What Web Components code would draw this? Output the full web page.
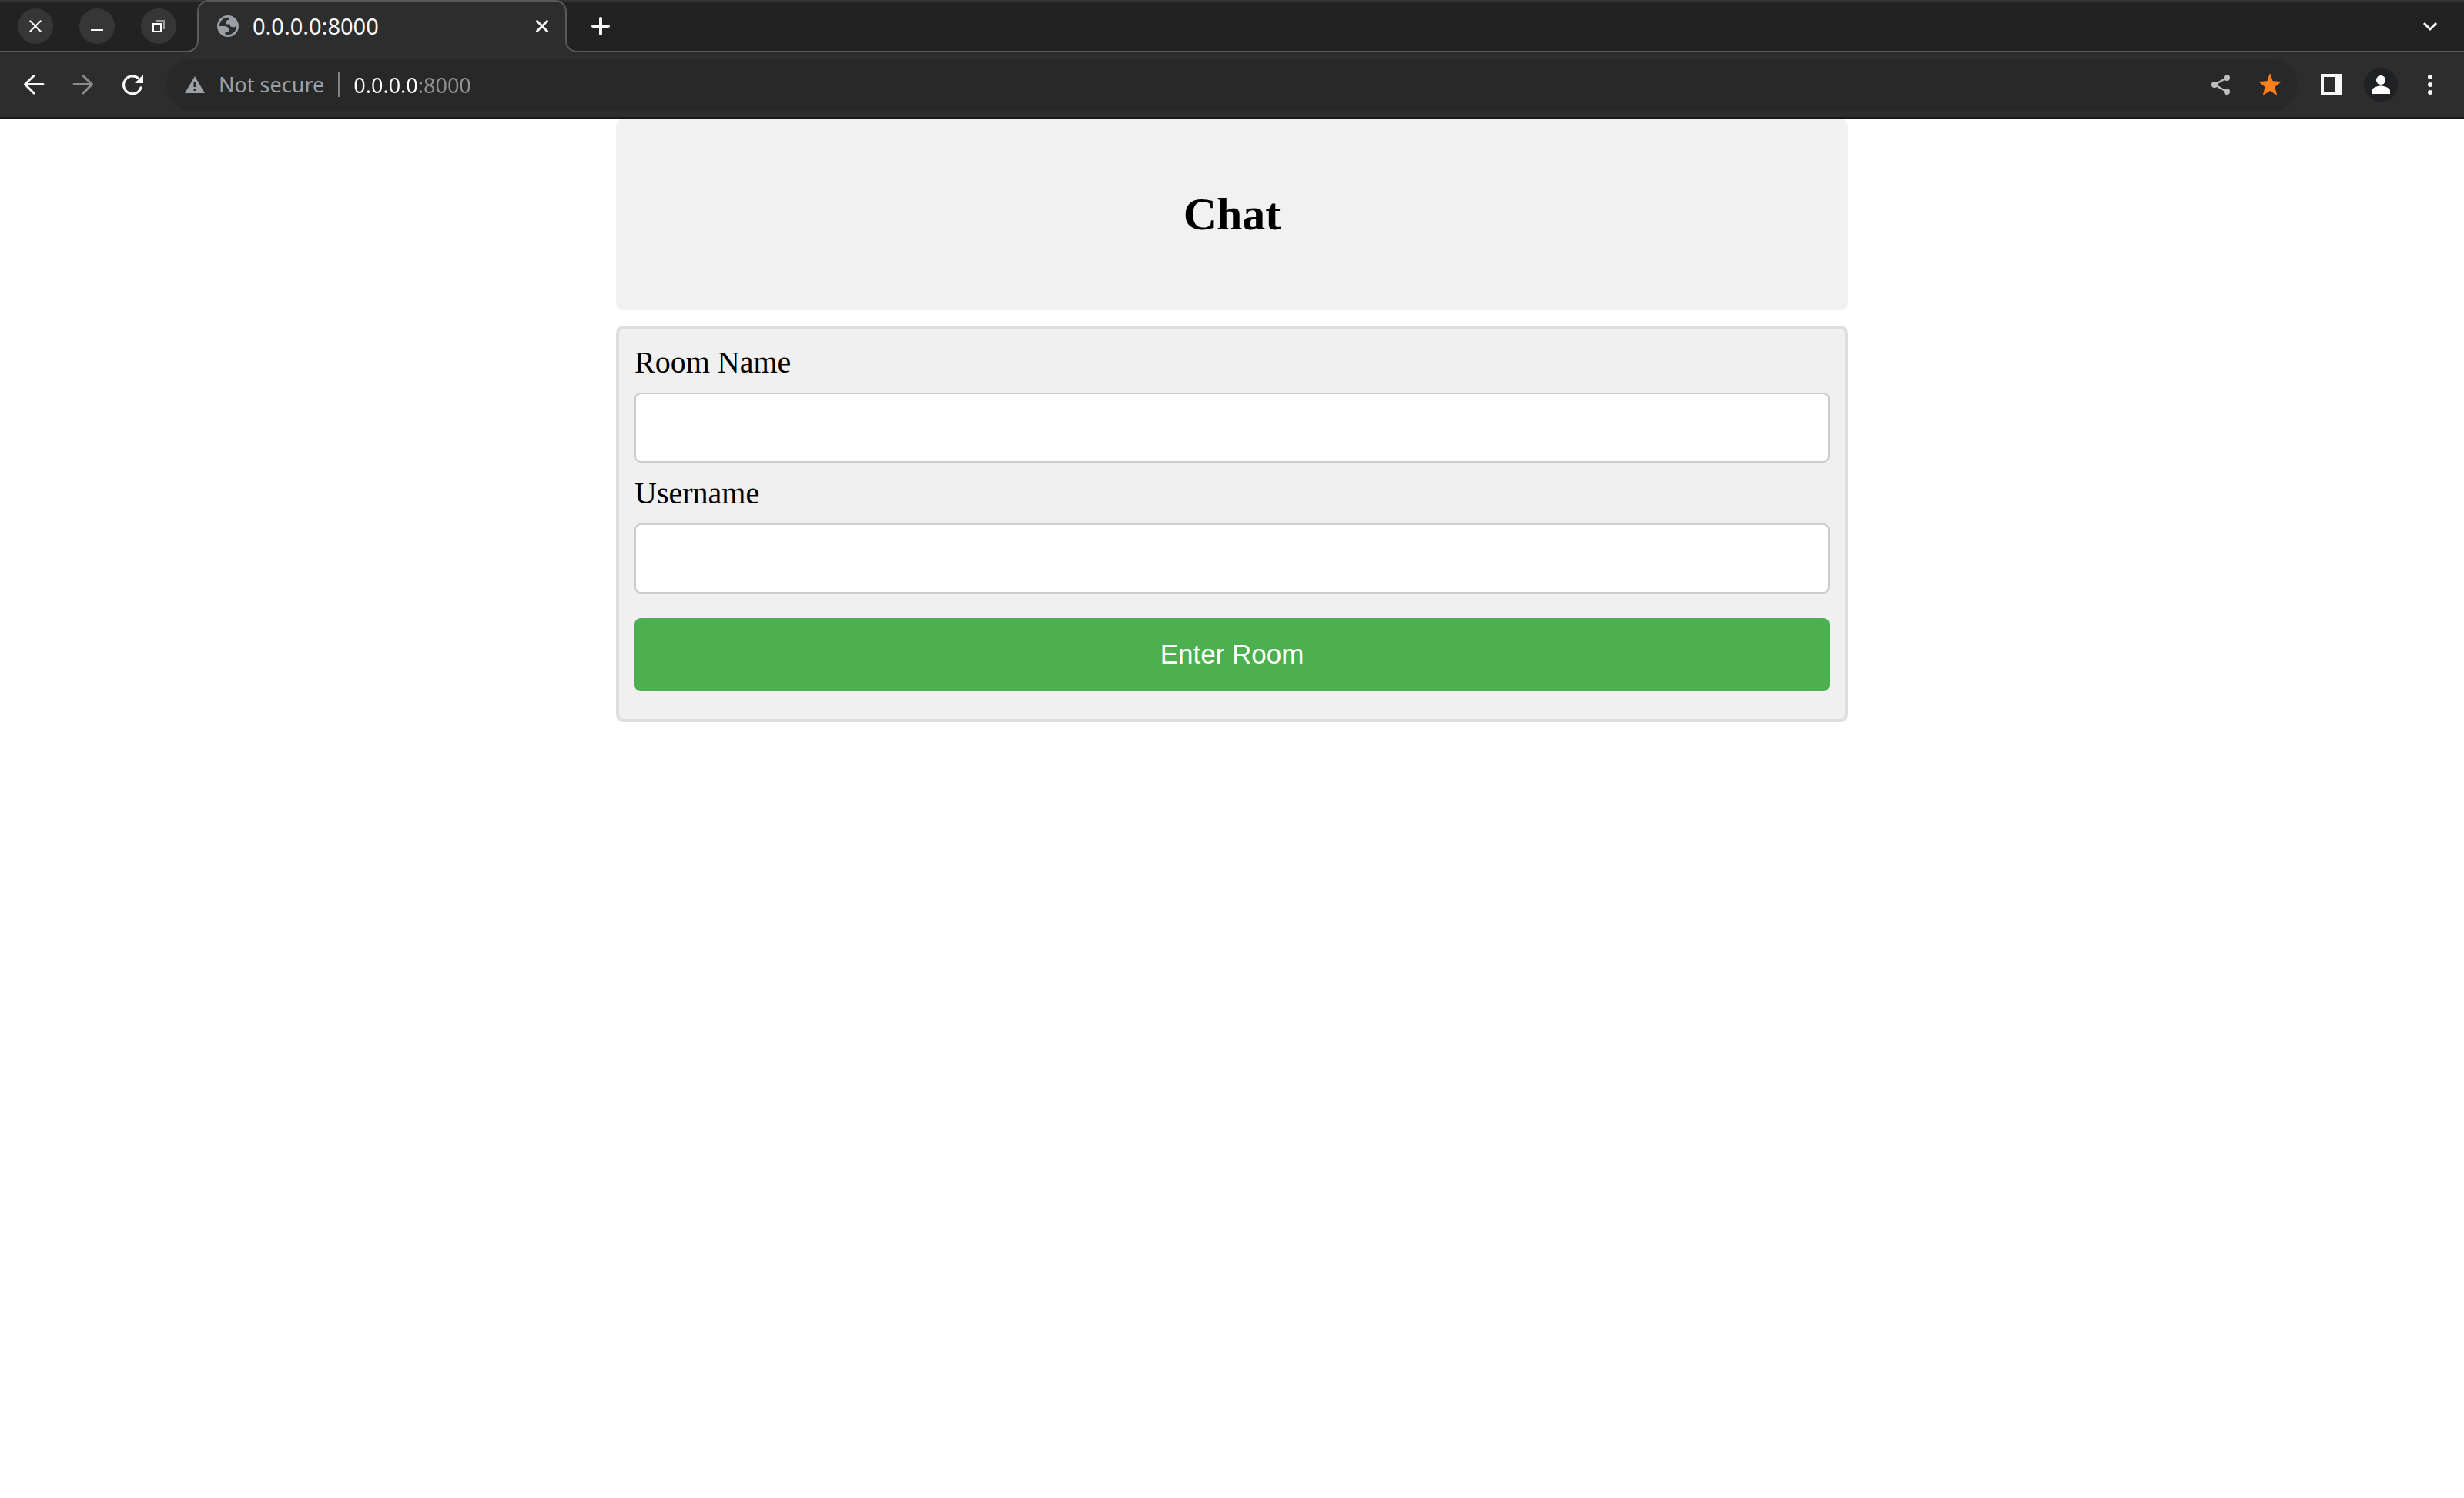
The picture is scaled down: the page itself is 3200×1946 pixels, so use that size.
<!DOCTYPE html>
<html lang="en">
<head>
<meta charset="utf-8">
<title>0.0.0.0:8000</title>
<style>
html, body { margin: 0; background: #fff; }
</style>
</head>
<body>
<browser-window></browser-window>

<template id="browser-window">
  <style>
    :host { display: flex; flex-direction: column; min-height: 100vh; }
    main { flex: 1; background: #fff; }
  </style>
  <tab-strip></tab-strip>
  <tool-bar></tool-bar>
  <main>
    <chat-page>
      <chat-header>Chat</chat-header>
      <room-form></room-form>
    </chat-page>
  </main>
</template>

<template id="icon-button">
  <style>
    :host { display: flex; width: 64px; align-self: stretch; color: #f8f8f8; }
    button { all: unset; flex: 1; display: flex; align-items: center; justify-content: center; cursor: pointer; }
    ::slotted(svg) { display: block; }
  </style>
  <button type="button"><slot></slot></button>
</template>

<template id="tab-strip">
  <style>
    :host { display: flex; height: 68px; background: #222; font-family: "Noto Sans", "Open Sans", sans-serif; }
    .rest, .controls { display: flex; align-items: center; box-sizing: border-box; border-top: 2px solid #333; border-bottom: 2px solid #5a5a5a; }
    .controls { padding: 0 14px 0 23px; gap: 34px; }
    .controls icon-button { width: 46px; height: 46px; align-self: center; border-radius: 50%; background: #363636; }
    .edge { display: block; flex: none; }
    .tab { display: flex; align-items: center; box-sizing: border-box; width: 450px; padding-left: 11px; gap: 18px; background: #2d2d2d; border-top: 2px solid #5a5a5a; padding-bottom: 2px; }
    .title { flex: 1; font-size: 29px; line-height: 40px; color: #f8f8f8; }
    .tab icon-button { width: 34px; }
    .rest { flex: 1; justify-content: space-between; padding-right: 12px; }
    .plus { width: 62px; }
  </style>
  <div class="controls">
    <icon-button label="Close window"><svg width="16" height="16" viewBox="0 0 16 16" fill="none" stroke="currentColor" stroke-width="2"><path d="M.7.7 15.3 15.3M15.3.7.7 15.3"/></svg></icon-button>
    <icon-button label="Minimise"><svg width="16" height="16" viewBox="0 0 16 16" fill="currentColor"><path d="M0 12h16v2H0z"/></svg></icon-button>
    <icon-button label="Restore"><svg width="16" height="16" viewBox="0 0 16 16" fill="none" stroke-width="2"><path d="M4 1h11v11" stroke="#999"/><path d="M1 5h10v10H1z" stroke="#fff"/></svg></icon-button>
  </div>
  <svg class="edge" width="28" height="68" viewBox="0 0 28 68"><path d="M0 0h28v2H0z" fill="#333"/><path d="M0 67A14 14 0 0 0 14 53V15A14 14 0 0 1 28 1V68H0z" fill="#2d2d2d"/><path d="M0 67A14 14 0 0 0 14 53V15A14 14 0 0 1 28 1" fill="none" stroke="#5a5a5a" stroke-width="2"/></svg>
  <div class="tab">
    <svg width="28" height="28" viewBox="2 2 20 20"><path fill="#9aa0a6" fill-rule="evenodd" d="M12 2C6.480 2 2 6.480 2 12s4.480 10 10 10 10-4.480 10-10S17.520 2 12 2zM4 12h4.400c3.407.022 4.922 1.730 4.543 5.127H9.488v2.470a8.004 8.004 0 0 0 10.498-8.083C19.327 12.504 18.332 13 17 13c-2.137 0-3.206-.916-3.206-2.750h-3.748c-.274-2.728.683-4.092 2.870-4.092 0-.975.327-1.597.811-1.970A8.004 8.004 0 0 0 4 12z"/></svg>
    <span class="title">0.0.0.0:8000</span>
    <icon-button label="Close tab"><svg width="18" height="18" viewBox="0 0 18 18" fill="none" stroke="currentColor" stroke-width="3" stroke-linecap="round"><path d="M2.500 2.500 15.500 15.500M15.500 2.500 2.500 15.500"/></svg></icon-button>
  </div>
  <svg class="edge" width="28" height="68" viewBox="0 0 28 68"><path d="M0 0h28v2H0z" fill="#333"/><path d="M28 67A14 14 0 0 1 14 53V15A14 14 0 0 0 0 1V68H28z" fill="#2d2d2d"/><path d="M28 67A14 14 0 0 1 14 53V15A14 14 0 0 0 0 1" fill="none" stroke="#5a5a5a" stroke-width="2"/></svg>
  <div class="rest">
    <icon-button class="plus" label="New tab"><svg width="24" height="24" viewBox="0 0 24 24" fill="none" stroke="currentColor" stroke-width="4" stroke-linecap="round"><path d="M12 2v20M2 12h20"/></svg></icon-button>
    <icon-button label="Search tabs"><svg width="20" height="14" viewBox="0 0 20 14" fill="none" stroke="currentColor" stroke-width="3"><path d="M2 3 10 11 18 3"/></svg></icon-button>
  </div>
</template>

<template id="tool-bar">
  <style>
    :host { display: flex; align-items: stretch; box-sizing: border-box; height: 86px; padding: 0 12px; background: #2d2d2d; border-bottom: 2px solid #181818; }
    address-bar { flex: 1; margin: 8px 12px; }
    .off { color: #8c8c8c; }
    .avatar { width: 44px; height: 44px; }
  </style>
  <icon-button label="Back"><svg width="28" height="28" viewBox="0 0 28 28" fill="none" stroke="currentColor" stroke-width="3" stroke-linecap="round" stroke-linejoin="round"><path d="M14 2.500 2.500 13.500 14 25M2.500 13.500H26"/></svg></icon-button>
  <icon-button class="off" label="Forward"><svg width="28" height="28" viewBox="0 0 28 28" fill="none" stroke="currentColor" stroke-width="3" stroke-linecap="round" stroke-linejoin="round"><path d="M14 2.500 25.500 13.500 14 25M25.500 13.500H2"/></svg></icon-button>
  <icon-button label="Reload"><svg width="28" height="28" viewBox="0 0 28 28"><path d="M25 18A11.500 11.500 0 1 1 21.500 5.500" fill="none" stroke="currentColor" stroke-width="3.200" stroke-linecap="round"/><path d="M28 1v11H17z" fill="currentColor"/></svg></icon-button>
  <address-bar></address-bar>
  <icon-button label="Side panel"><svg width="28" height="28" viewBox="0 0 28 28" fill="currentColor" fill-rule="evenodd"><path d="M0 0h28v28H0zM4 4v20h14V4z"/></svg></icon-button>
  <icon-button label="Profile"><svg class="avatar" viewBox="0 0 44 44"><circle cx="22" cy="22" r="22" fill="#202124"/><circle cx="22" cy="16" r="6" fill="#fff"/><path d="M10 34v-4c0-4 8-6.500 12-6.500s12 2.500 12 6.500v4z" fill="#fff"/></svg></icon-button>
  <icon-button label="Menu"><svg width="6" height="26" viewBox="0 0 6 26" fill="currentColor"><circle cx="3" cy="3" r="3"/><circle cx="3" cy="13" r="3"/><circle cx="3" cy="23" r="3"/></svg></icon-button>
</template>

<template id="address-bar">
  <style>
    :host { display: flex; align-items: center; padding: 0 4px 0 24px; border-radius: 34px; background: #282828; font-family: "Noto Sans", "Open Sans", sans-serif; font-size: 27px; line-height: 36px; }
    .warn { display: block; flex: none; margin-right: 18px; }
    label { color: #9aa0a6; white-space: nowrap; }
    .bar { width: 2px; height: 32px; margin: 0 18px; background: #828282; }
    input { flex: 1; min-width: 0; height: 40px; padding: 0; border: 0; outline: 0; font: inherit; color: transparent; caret-color: #fff; background: linear-gradient(90deg, #fff 84px, #919191 84px); -webkit-background-clip: text; background-clip: text; }
    .share { color: #bdbdbd; }
    .star { color: #ff7f1a; }
  </style>
  <svg class="warn" width="26" height="22" viewBox="0 0 26 22" fill="#9aa0a6" fill-rule="evenodd"><path d="M13 0 26 22H0zM11.500 8v6h3V8zM11.500 16v3h3v-3z"/></svg>
  <label for="url">Not secure</label>
  <span class="bar"></span>
  <input id="url" type="text" value="0.0.0.0:8000" spellcheck="false">
  <icon-button class="share" label="Share"><svg width="24" height="26" viewBox="0 0 24 26"><path d="M20 4 4 13 20 22" fill="none" stroke="currentColor" stroke-width="2.500"/><g fill="currentColor"><circle cx="20" cy="4" r="4"/><circle cx="4" cy="13" r="4"/><circle cx="20" cy="22" r="4"/></g></svg></icon-button>
  <icon-button class="star" label="Bookmark"><svg width="30" height="30" viewBox="0 0 30 30" fill="currentColor"><path d="M15 0 18.600 10.300 30 11 21.300 17.900 24.300 29 15 22.900 5.700 29 8.700 17.900 0 11 11.400 10.300z"/></svg></icon-button>
</template>

<template id="chat-page">
  <style>
    :host { display: flex; flex-direction: column; gap: 20px; width: 50%; margin: 0 auto; font-family: "Liberation Serif", "Times New Roman", serif; color: #000; }
  </style>
  <slot></slot>
</template>

<template id="chat-header">
  <style>
    :host { display: block; padding: 90px 20px; border-radius: 10px; background: #f1f1f1; text-align: center; }
    h1 { margin: 0; font-size: 60px; line-height: 69px; font-weight: bold; }
  </style>
  <h1><slot></slot></h1>
</template>

<template id="room-form">
  <style>
    :host { display: block; border: 4px solid #ddd; border-radius: 10px; background: #f0f0f0; }
    form { display: flex; flex-direction: column; gap: 16px; padding: 20px 20px 36px; }
    button { height: 95px; margin-top: 16px; padding: 0 0 2px; border: 0; border-radius: 8px; background: #4caf50; color: #fff; font: 35px "Liberation Sans", Arial, sans-serif; cursor: pointer; }
  </style>
  <form>
    <text-field label="Room Name" name="room"></text-field>
    <text-field label="Username" name="user"></text-field>
    <button type="button">Enter Room</button>
  </form>
</template>

<template id="text-field">
  <style>
    :host { display: flex; flex-direction: column; gap: 15px; }
    label { font-size: 40px; line-height: 48px; }
    input { box-sizing: border-box; width: 100%; height: 91px; padding: 0 24px; border: 2px solid #ccc; border-radius: 8px; background: #fff; font: 35px "Liberation Sans", Arial, sans-serif; }
  </style>
  <label for="field"></label>
  <input id="field" type="text">
</template>

<script>
class TemplateElement extends HTMLElement {
  constructor() {
    super();
    const template = document.getElementById(this.constructor.tag);
    this.attachShadow({ mode: "open" }).append(document.importNode(template.content, true));
  }
}

class IconButton extends TemplateElement {
  static tag = "icon-button";
  connectedCallback() {
    this.shadowRoot.querySelector("button").setAttribute("aria-label", this.getAttribute("label"));
  }
}

class TextField extends TemplateElement {
  static tag = "text-field";
  connectedCallback() {
    this.shadowRoot.querySelector("label").textContent = this.getAttribute("label");
    this.shadowRoot.querySelector("input").name = this.getAttribute("name");
  }
}

class AddressBar extends TemplateElement { static tag = "address-bar"; }
class TabStrip extends TemplateElement { static tag = "tab-strip"; }
class ToolBar extends TemplateElement { static tag = "tool-bar"; }
class ChatHeader extends TemplateElement { static tag = "chat-header"; }
class RoomForm extends TemplateElement { static tag = "room-form"; }
class ChatPage extends TemplateElement { static tag = "chat-page"; }
class BrowserWindow extends TemplateElement { static tag = "browser-window"; }

for (const type of [IconButton, TextField, AddressBar, TabStrip, ToolBar, ChatHeader, RoomForm, ChatPage, BrowserWindow]) {
  customElements.define(type.tag, type);
}
</script>
</body>
</html>
